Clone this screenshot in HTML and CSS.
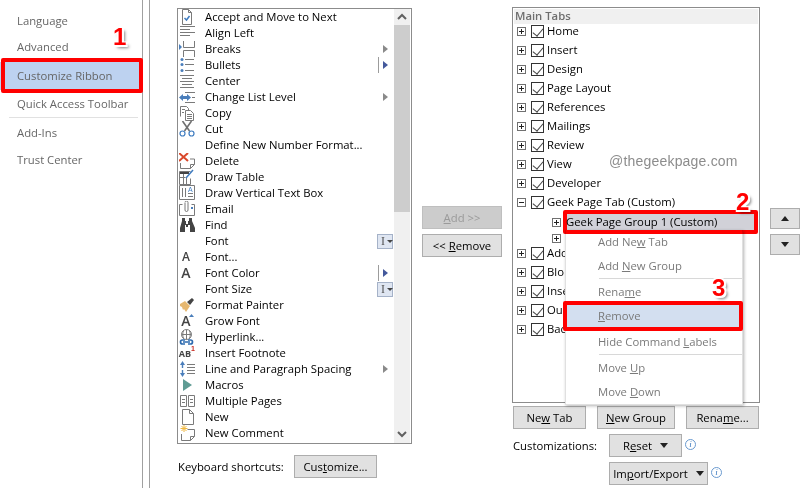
FILE: index.html
```html
<!DOCTYPE html>
<html lang="en">
<head>
  <meta charset="UTF-8" />
  <title>Word Options - Customize Ribbon</title>
  <link rel="stylesheet" href="styles.css">
</head>
<body>
  <div class="page">

    <nav class="sidebar">
      <div class="nav-item nav-a">Language</div>
      <div class="nav-item nav-a">Advanced</div>
      <div class="nav-item nav-b nav-active">Customize Ribbon</div>
      <div class="nav-item nav-b">Quick Access Toolbar</div>
      <div class="nav-sep"></div>
      <div class="nav-item nav-b">Add-Ins</div>
      <div class="nav-item nav-a">Trust Center</div>
    </nav>

    <main class="main">

      <section class="commands">
        <div class="list">
          <ul class="cmd-rows">
            <li class="cmd"><svg class="ico" viewBox="0 0 16 16"><path class="ln" d="M3.500 .5h6l3 3v12h-9z M9.500 .5v3h3"/><path class="blue2" d="M5.500 9l2 2 3-4"/></svg><span>Accept and Move to Next</span></li>
            <li class="cmd"><svg class="ico" viewBox="0 0 16 16"><path class="ln" d="M1 1.500h15 M1 4.500h10 M1 7.500h15 M1 10.500h10 M1 13.500h0"/></svg><span>Align Left</span></li>
            <li class="cmd"><svg class="ico" viewBox="0 0 16 16"><path class="ln" d="M4.500 0v6.500h11V0 M4.500 16V9.500h11V16"/><path class="blue" d="M0 3l3 3-3 3z"/></svg><span>Breaks</span><i class="arrow"></i></li>
            <li class="cmd"><svg class="ico" viewBox="0 0 16 16"><path class="ln" d="M6 2.500h9 M6 7.500h9 M6 13.500h9"/><circle class="blue" cx="3" cy="2.500" r="1.500"/><circle class="blue" cx="3" cy="7.500" r="1.500"/><circle class="blue" cx="3" cy="13.500" r="1.500"/></svg><span>Bullets</span><i class="arrow arrow-split"></i></li>
            <li class="cmd"><svg class="ico" viewBox="0 0 16 16"><path class="ln" d="M1 2.500h14 M3 5.500h10 M1 8.500h14 M3 11.500h10 M1 14.500h14"/></svg><span>Center</span></li>
            <li class="cmd"><svg class="ico" viewBox="0 0 16 16"><path class="ln" d="M6 3.500h10 M13 8.500h3 M6 13.500h10"/><path class="blue" d="M0 8.500l4-3.500v2h4V5l4 3.500L8 12v-2H4v2z"/></svg><span>Change List Level</span><i class="arrow"></i></li>
            <li class="cmd"><svg class="ico" viewBox="0 0 16 16"><path class="ln" d="M1.500 11.500V1.500h6l2 2v2 M6.500 5.500h5l3 3v7h-8z M3 4.500h3 M3 7.500h2 M8 9.500h5 M8 11.500h5 M8 13.500h5"/></svg><span>Copy</span></li>
            <li class="cmd"><svg class="ico" viewBox="0 0 16 16"><path class="ln2" d="M3.500 0l7 10 M12.500 0l-7 10"/><circle class="blue-ring" cx="3.500" cy="12.500" r="2.500"/><circle class="blue-ring" cx="12.500" cy="12.500" r="2.500"/></svg><span>Cut</span></li>
            <li class="cmd"><span class="ico"></span><span>Define New Number Format...</span></li>
            <li class="cmd"><svg class="ico" viewBox="0 0 16 16"><path class="ln" d="M1.500 10v5.500h10l4-4V6H11 M11.500 15.500v-4h4"/><path class="red" d="M0 0l9 8 M9 0L0 8"/></svg><span>Delete</span></li>
            <li class="cmd"><svg class="ico" viewBox="0 0 16 16"><path class="ln" d="M.5 2.500h11 M.5 2.500v13h11v-6 M.5 8.500h6 M4.500 2.500v13 M7.500 9v6.500"/><path class="dark" d="M1 3h9v2H1z"/><path class="blue2" d="M7 9l7-8"/></svg><span>Draw Table</span></li>
            <li class="cmd"><svg class="ico" viewBox="0 0 16 16"><path class="ln" d="M.5 .5h15v14H.5z M3.500 3v9 M6.500 3v9 M9 8.500h5 M9 11.500h5"/><text class="glyph-a" x="9" y="7">A</text></svg><span>Draw Vertical Text Box</span></li>
            <li class="cmd"><svg class="ico" viewBox="0 0 16 16"><path class="ln" d="M3.500 3.500h-3v11h15v-11h-3"/><path class="ln" d="M6 2v7a1.500 1.500 0 0 0 3 0V1.500a1.500 1.500 0 0 0-3 0"/><path class="blue" d="M12 6h2v2h-2z"/></svg><span>Email</span></li>
            <li class="cmd"><svg class="ico" viewBox="0 0 16 16"><path class="dark" d="M3 1h3v3h1v3h2V4h1V1h3v3l3 7v4h-5V8H9v2H7V8H6v7H1v-4l2-7z"/></svg><span>Find</span></li>
            <li class="cmd"><span class="ico"></span><span>Font</span><b class="split"><i class="ibeam">I</i><i class="caret"></i></b></li>
            <li class="cmd"><span class="ico"><em class="glyph">A</em></span><span>Font...</span></li>
            <li class="cmd"><span class="ico"><em class="glyph glyph-big">A</em></span><span>Font Color</span><i class="arrow arrow-split"></i></li>
            <li class="cmd"><span class="ico"></span><span>Font Size</span><b class="split"><i class="ibeam">I</i><i class="caret"></i></b></li>
            <li class="cmd"><svg class="ico" viewBox="0 0 16 16"><path class="tan" d="M1 7l5-3 5 5-4 6-2-3-1 1-1-3-2-1z"/><path class="dark" d="M8 5l5-4 2 2-4 5z"/></svg><span>Format Painter</span></li>
            <li class="cmd"><span class="ico"><em class="glyph glyph-big">A</em><svg class="ico-top" viewBox="0 0 16 16"><path class="blue" d="M10 4l2.500-3L15 4z"/></svg></span><span>Grow Font</span></li>
            <li class="cmd"><svg class="ico" viewBox="0 0 16 16"><circle class="ln" cx="7.500" cy="5.500" r="5"/><path class="ln" d="M2.500 5.500h10 M7.500 .5v10 M4.500 1.500c-1 3-1 5 0 8 M10.500 1.500c1 3 1 5 0 8"/><path class="blue-ring2" d="M6 11H3.500a2 2 0 0 0 0 4H6 M9 11h2.500a2 2 0 0 1 0 4H9 M4 13h7"/></svg><span>Hyperlink...</span></li>
            <li class="cmd"><span class="ico"><em class="glyph glyph-ab">AB</em><em class="glyph-one">1</em></span><span>Insert Footnote</span></li>
            <li class="cmd"><svg class="ico" viewBox="0 0 16 16"><path class="ln" d="M8 3.500h8 M8 6.500h8 M8 9.500h8 M8 12.500h8"/><path class="blue" d="M1 4l2.500-4L6 4H4.200v3H2.800V4z M1 12l2.500 4L6 12H4.200V9H2.800v3z"/></svg><span>Line and Paragraph Spacing</span><i class="arrow"></i></li>
            <li class="cmd"><svg class="ico" viewBox="0 0 16 16"><path class="teal" d="M4 2l9 6-9 6z"/></svg><span>Macros</span></li>
            <li class="cmd"><svg class="ico" viewBox="0 0 16 16"><path class="ln" d="M1.500 2.500h6v11h-6z M9.500 2.500h6v11h-6z M3 6.500h3 M3 9.500h3 M11 6.500h3 M11 9.500h3"/></svg><span>Multiple Pages</span></li>
            <li class="cmd"><svg class="ico" viewBox="0 0 16 16"><path class="ln" d="M3.500 .5h7l4 4v11h-11z M10.500 .5v4h4"/></svg><span>New</span></li>
            <li class="cmd"><svg class="ico" viewBox="0 0 16 16"><path class="star" d="M5 0v7 M1.500 3.500h7 M2.500 1l5 5 M7.500 1l-5 5"/><path class="ln" d="M8.500 4.500h7v7l-4 4h-9V9 M11.500 15.500v-4h4"/></svg><span>New Comment</span></li>
          </ul>
          <div class="scrollbar">
            <svg class="chev" viewBox="0 0 16 16"><path d="M4 10l4-4 4 4"/></svg>
            <div class="thumb"></div>
            <svg class="chev chev-down" viewBox="0 0 16 16"><path d="M4 6l4 4 4-4"/></svg>
          </div>
        </div>
        <div class="shortcuts">
          <label>Keyboard shortcuts:</label>
          <button class="btn btn-customize">Cus<u>t</u>omize...</button>
        </div>
      </section>

      <section class="transfer">
        <button class="btn btn-move" disabled><u>A</u>dd &gt;&gt;</button>
        <button class="btn btn-move">&lt;&lt; <u>R</u>emove</button>
      </section>

      <section class="ribbon">
        <div class="ribbon-top">
          <div class="tree">
            <div class="tree-head">Main Tabs</div>
            <div class="row"><i class="box"></i><i class="check"></i><span>Home</span></div>
            <div class="row"><i class="box"></i><i class="check"></i><span>Insert</span></div>
            <div class="row"><i class="box"></i><i class="check"></i><span>Design</span></div>
            <div class="row"><i class="box"></i><i class="check"></i><span>Page Layout</span></div>
            <div class="row"><i class="box"></i><i class="check"></i><span>References</span></div>
            <div class="row"><i class="box"></i><i class="check"></i><span>Mailings</span></div>
            <div class="row"><i class="box"></i><i class="check"></i><span>Review</span></div>
            <div class="row"><i class="box"></i><i class="check"></i><span>View</span></div>
            <div class="row"><i class="box"></i><i class="check"></i><span>Developer</span></div>
            <div class="row"><i class="box box-minus"></i><i class="check"></i><span>Geek Page Tab (Custom)</span></div>
            <div class="row row-group"><i class="box"></i><span class="group-label">Geek Page Group 1 (Custom)</span></div>
            <div class="row row-sub"><i class="box"></i></div>
            <div class="row"><i class="box"></i><i class="check"></i><span>Add</span></div>
            <div class="row"><i class="box"></i><i class="check"></i><span>Blo</span></div>
            <div class="row"><i class="box"></i><i class="check"></i><span>Inse</span></div>
            <div class="row"><i class="box"></i><i class="check"></i><span>Ou</span></div>
            <div class="row"><i class="box"></i><i class="check"></i><span>Bac</span></div>
          </div>
          <div class="updown">
            <button class="btn btn-arrow"><i class="tri tri-up"></i></button>
            <button class="btn btn-arrow"><i class="tri"></i></button>
          </div>
        </div>

        <div class="tree-buttons">
          <button class="btn btn-tree">Ne<u>w</u> Tab</button>
          <button class="btn btn-tree btn-group"><u>N</u>ew Group</button>
          <button class="btn btn-tree">Rena<u>m</u>e...</button>
        </div>

        <div class="custom">
          <label>Customizations:</label>
          <div class="custom-btns">
            <div class="custom-row">
              <button class="btn btn-reset">R<u>e</u>set<i class="tri tri-btn"></i></button>
              <i class="info">i</i>
            </div>
            <div class="custom-row">
              <button class="btn btn-import">Im<u>p</u>ort/Export<i class="tri tri-btn"></i></button>
              <i class="info">i</i>
            </div>
          </div>
        </div>
      </section>
    </main>

    <!-- context menu and the tutorial marks sit on top of the dialog -->
    <div class="menu">
      <div class="menu-item">Add Ne<u>w</u> Tab</div>
      <div class="menu-item">Add <u>N</u>ew Group</div>
      <div class="menu-sep"></div>
      <div class="menu-item">Rena<u>m</u>e</div>
      <div class="menu-item menu-hover"><u>R</u>emove</div>
      <div class="menu-item">Hide Command <u>L</u>abels</div>
      <div class="menu-sep"></div>
      <div class="menu-item">Move <u>U</u>p</div>
      <div class="menu-item">Move <u>D</u>own</div>
    </div>

    <div class="mark mark-nav"></div>
    <div class="mark mark-group"></div>
    <div class="mark mark-remove"></div>
    <div class="num num-1">1</div>
    <div class="num num-2">2</div>
    <div class="num num-3">3</div>
    <div class="watermark">@thegeekpage.com</div>
  </div>
</body>
</html>
```

FILE: styles.css
```css
* {
  margin: 0;
  padding: 0;
  box-sizing: border-box;
}

html, body {
  height: 100%;
  overflow: hidden;
  background: white;
  font-family: "Open Sans", "Noto Sans", sans-serif;
  font-size: 11.3px;
  color: #000;
}

.page {
  position: relative;
  display: flex;
  width: 809px;
  height: 488px;
  overflow: hidden;
}

/* left navigation */
.sidebar {
  width: 143px;
  height: 100%;
  padding-top: 8px;
  border-right: 1px solid #a0a0a0;
  color: #666;
}

.nav-item {
  display: flex;
  align-items: center;
  padding-left: 17px;
  padding-bottom: 1px;
}

.nav-a { height: 26px; }
.nav-b { height: 28px; }

.nav-active {
  margin-top: 2px;
  background: #bdd2f0;
}

.nav-sep {
  height: 1px;
  margin: -1px 4px 1px 9px;
  background: #e1e1e1;
}

.main {
  display: flex;
  flex: 1;
  margin-left: 6px;
  border-left: 1px solid #a0a0a0;
}

/* command list */
.commands {
  width: 235px;
  margin-left: 27px;
  padding-top: 8px;
}

.list {
  display: flex;
  height: 436px;
  border: 1px solid #8c8c8c;
  overflow: hidden;
}

.cmd-rows {
  flex: 1;
  list-style: none;
}

.cmd {
  display: flex;
  align-items: center;
  height: 16px;
  padding-left: 1px;
  white-space: nowrap;
}

.cmd > span:last-of-type {
  position: relative;
  top: -1px;
}

.ico {
  position: relative;
  display: block;
  flex: none;
  width: 16px;
  height: 16px;
  margin-right: 10px;
}

.ico-top {
  position: absolute;
  top: 0;
  left: 0;
  width: 16px;
  height: 16px;
}

.ln { fill: none; stroke: #7a7a7a; stroke-width: 1; }
.ln2 { fill: none; stroke: #707070; stroke-width: 1.6; }
.blue { fill: #4a7ebb; }
.blue2 { fill: none; stroke: #3f7cc0; stroke-width: 1.5; }
.blue-ring { fill: none; stroke: #3f7cc0; stroke-width: 1.2; }
.blue-ring2 { fill: none; stroke: #2f6cb0; stroke-width: 1.7; }
.red { fill: none; stroke: #d9482b; stroke-width: 2; }
.dark { fill: #444; }
.tan { fill: #e6b871; }
.teal { fill: #5f9c94; }
.star { fill: none; stroke: #f0b840; stroke-width: 1; }
.glyph-a { font-size: 7px; font-family: "Liberation Sans", sans-serif; fill: #3f7cc0; }

.glyph {
  position: absolute;
  top: 0;
  left: 1px;
  width: 12px;
  text-align: center;
  font-family: "Open Sans", sans-serif;
  font-style: normal;
  font-weight: 600;
  font-size: 12px;
  line-height: 16px;
  color: #444;
}

.glyph-big { font-size: 14px; }

.glyph-ab {
  left: -1px;
  width: 14px;
  font-size: 9px;
  font-weight: bold;
  line-height: 18px;
}

.glyph-one {
  position: absolute;
  top: -1px;
  right: 0;
  font-family: "Liberation Sans", sans-serif;
  font-style: normal;
  font-size: 7px;
  font-weight: bold;
  line-height: 10px;
  color: #c8281e;
}

.arrow {
  position: absolute;
  left: 383px;
  width: 0;
  height: 0;
  border-left: 5px solid #8a8a8a;
  border-top: 4px solid transparent;
  border-bottom: 4px solid transparent;
}

.arrow-split { border-left-color: #44599c; }

.arrow-split::before {
  content: "";
  position: absolute;
  top: -8px;
  left: -10px;
  width: 1px;
  height: 16px;
  background: #9c9c9c;
}

.split {
  position: absolute;
  left: 377px;
  display: flex;
  align-items: center;
  width: 16px;
  height: 15px;
  padding-left: 3px;
  background: #dfe6f2;
  border: 1px solid #a5b2c8;
  font-weight: normal;
}

.ibeam {
  font-family: "Liberation Serif", serif;
  font-style: normal;
  font-size: 12px;
  line-height: 13px;
  color: #555;
}

.caret {
  margin-left: 2px;
  border-top: 3px solid #444;
  border-left: 3px solid transparent;
  border-right: 3px solid transparent;
}

.scrollbar {
  position: relative;
  flex: none;
  width: 16px;
  background: #f0f0f0;
  margin-right: 1px;
}

.thumb {
  position: absolute;
  top: 16px;
  left: 0;
  width: 100%;
  height: 187px;
  background: #cdcdcd;
}

.chev {
  display: block;
  width: 16px;
  height: 16px;
  fill: none;
  stroke: #606060;
  stroke-width: 2;
}

.chev-down {
  position: absolute;
  bottom: 1px;
  left: 0;
}

.shortcuts {
  display: flex;
  align-items: center;
  margin-top: 11px;
  padding-left: 1px;
}

.shortcuts label { width: 116px; }

/* buttons */
.btn {
  height: 23px;
  background: #e1e1e1;
  border: 1px solid #adadad;
  font-family: inherit;
  font-size: inherit;
  color: #000;
}

.btn:disabled {
  background: #cccccc;
  border-color: #bfbfbf;
  color: #9a9a9a;
}

.btn-customize { width: 83px; }

.transfer {
  display: flex;
  flex-direction: column;
  gap: 5px;
  width: 100px;
  padding: 206px 0 0 10px;
}

.btn-move { width: 80px; }

/* right tree */
.ribbon {
  padding-top: 7px;
}

.ribbon-top {
  display: flex;
}

.tree {
  width: 248px;
  height: 396px;
  padding: 1px;
  border: 1px solid #8c8c8c;
  overflow: hidden;
}

.tree-head {
  height: 15px;
  margin-bottom: -2px;
  padding-left: 1px;
  background: #f0f0f0;
  font-weight: 600;
  line-height: 14px;
  color: #6d6d6d;
}

.row {
  position: relative;
  display: flex;
  align-items: center;
  height: 19px;
  padding-left: 3px;
  white-space: nowrap;
}

.row > span {
  position: relative;
  top: -1px;
}

.row-group { height: 21px; padding-left: 38px; }
.row-sub { height: 11px; padding-left: 38px; }

.group-label { margin-left: 5px; }

.box {
  position: relative;
  flex: none;
  width: 9px;
  height: 9px;
  border: 1px solid #707070;
  background: white;
}

.box::before {
  content: "";
  position: absolute;
  top: 3px;
  left: 1px;
  width: 5px;
  height: 1px;
  background: #222;
}

.box::after {
  content: "";
  position: absolute;
  top: 1px;
  left: 3px;
  width: 1px;
  height: 5px;
  background: #222;
}

.box-minus::after { display: none; }

.check {
  position: relative;
  flex: none;
  width: 13px;
  height: 13px;
  margin: 0 3px 0 5px;
  border: 1px solid #333;
  background: white;
}

.check::after {
  content: "";
  position: absolute;
  top: 0;
  left: 3px;
  width: 5px;
  height: 9px;
  border-right: 1px solid #444;
  border-bottom: 1px solid #444;
  transform: rotate(40deg);
}

.updown {
  display: flex;
  flex-direction: column;
  gap: 5px;
  margin-left: 10px;
  padding-top: 201px;
}

.btn-arrow {
  display: flex;
  align-items: center;
  justify-content: center;
  width: 30px;
  height: 21px;
}

.tri {
  border-top: 5px solid #222;
  border-left: 4px solid transparent;
  border-right: 4px solid transparent;
}

.tri-up { transform: rotate(180deg); }

.tri-btn {
  display: inline-block;
  margin-left: 8px;
  vertical-align: 2px;
}

.tree-buttons {
  display: flex;
  gap: 11px;
  margin-top: 3px;
  padding-left: 1px;
}

.btn-tree { width: 73px; }
.btn-group { width: 78px; }

.custom {
  display: flex;
  margin-top: 5px;
  padding-left: 1px;
}

.custom label {
  width: 96px;
  line-height: 24px;
}

.custom-btns {
  display: flex;
  flex-direction: column;
  gap: 5px;
}

.custom-row {
  display: flex;
  gap: 2px;
}

.btn-reset { width: 73px; }
.btn-import { width: 99px; }

.info {
  width: 11px;
  height: 11px;
  margin: 5px 0 0 1px;
  border: 1px solid #6a9ad0;
  border-radius: 50%;
  font-family: "Liberation Serif", serif;
  font-size: 9px;
  line-height: 9px;
  text-align: center;
  color: #3f7cc0;
}

/* context menu */
.menu {
  position: absolute;
  top: 230px;
  left: 565px;
  width: 178px;
  height: 175px;
  background: white;
  border: 1px solid #e0e0e0;
  border-top: 0;
  box-shadow: 1px 1px 3px rgba(0, 0, 0, 0.3);
  color: #7a7a7a;
}

.menu-item {
  display: flex;
  align-items: center;
  height: 24px;
  padding-left: 32px;
  padding-bottom: 1px;
  white-space: pre;
}

.menu-hover { margin-bottom: 2px; background: #d3dff0; }

.menu-sep {
  height: 1px;
  margin: 0 0 1px 33px;
  background: #d8d8d8;
}

/* red tutorial marks */
.mark {
  position: absolute;
  border: 4px solid #f00;
  border-radius: 2px;
}

.mark-nav { top: 58px; left: 1px; width: 142px; height: 35px; }
.mark-group { top: 210px; left: 563px; width: 195px; height: 24px; background: rgba(190, 190, 200, 0.7); mix-blend-mode: multiply; }
.mark-remove { top: 301px; left: 563px; width: 180px; height: 30px; }

.num {
  position: absolute;
  font-family: "Liberation Sans", sans-serif;
  font-size: 24px;
  font-weight: bold;
  line-height: 24px;
  color: #f00;
  text-shadow: -2px -1px 0 #fff, 2px -1px 0 #fff, -1px 2px 0 #fff, 2px 2px 0 #fff, 3px 3px 3px rgba(0, 0, 0, 0.5);
}

.num-1 { top: 25px; left: 113px; }
.num-2 { top: 190px; left: 736px; }
.num-3 { top: 276px; left: 712px; }

.watermark {
  position: absolute;
  top: 152px;
  left: 609px;
  font-family: "Liberation Sans", sans-serif;
  font-size: 14px;
  line-height: 18px;
  letter-spacing: .2px;
  color: #8c8c8c;
}
```
